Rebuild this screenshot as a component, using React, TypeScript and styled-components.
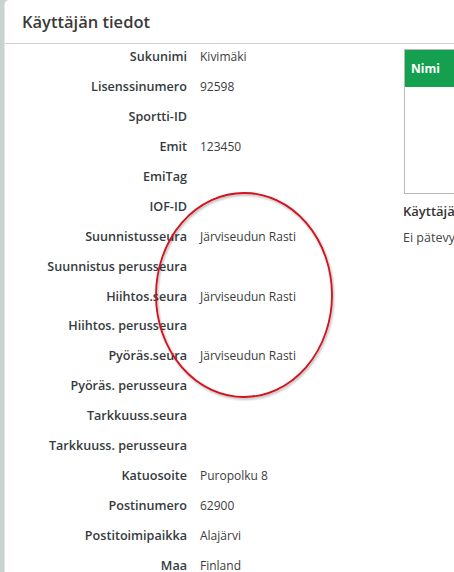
import styled, { createGlobalStyle } from 'styled-components';

const GlobalStyle = createGlobalStyle`
  html, body {
    margin: 0;
    padding: 0;
    overflow: hidden;
    background: #c9d2cf;
  }
  body {
    font-family: "Open Sans", "DejaVu Sans", sans-serif;
    color: #333;
  }
`

type Field = { label: string; value?: string };

const fields: Field[] = [
  { label: 'Sukunimi', value: 'Kivimäki' },
  { label: 'Lisenssinumero', value: '92598' },
  { label: 'Sportti-ID' },
  { label: 'Emit', value: '123450' },
  { label: 'EmiTag' },
  { label: 'IOF-ID' },
  { label: 'Suunnistusseura', value: 'Järviseudun Rasti' },
  { label: 'Suunnistus perusseura' },
  { label: 'Hiihtos.seura', value: 'Järviseudun Rasti' },
  { label: 'Hiihtos. perusseura' },
  { label: 'Pyöräs.seura', value: 'Järviseudun Rasti' },
  { label: 'Pyöräs. perusseura' },
  { label: 'Tarkkuuss.seura' },
  { label: 'Tarkkuuss. perusseura' },
  { label: 'Katuosoite', value: 'Puropolku 8' },
  { label: 'Postinumero', value: '62900' },
  { label: 'Postitoimipaikka', value: 'Alajärvi' },
  { label: 'Maa', value: 'Finland' },
];

export default function App() {
  return (
    <>
      <GlobalStyle />
      <Page>
        <Panel>
          <Header>
            <Title>Käyttäjän tiedot</Title>
          </Header>
          <Body>
            <Form>
              {fields.map((f) => (
                <Row key={f.label}>
                  <Label>{f.label}</Label>
                  <Value>{f.value ?? ''}</Value>
                </Row>
              ))}
            </Form>
            <Side>
              <Table>
                <thead>
                  <tr>
                    <Th>Nimi</Th>
                  </tr>
                </thead>
                <tbody>
                  <tr>
                    <Td></Td>
                  </tr>
                </tbody>
              </Table>
              <SideTitle>Käyttäjän pätevyydet</SideTitle>
              <SideText>Ei pätevyyksiä</SideText>
            </Side>
          </Body>
        </Panel>
        <Annotation width="200" height="230" viewBox="0 0 200 230">
          <defs>
            <filter id="shade" x="-10%" y="-10%" width="120%" height="120%">
              <feDropShadow dx="1" dy="1.5" stdDeviation="1" floodColor="#000" floodOpacity="0.35" />
            </filter>
          </defs>
          <ellipse cx="94" cy="109" rx="88" ry="102" fill="none" stroke="#d0121c" strokeWidth="1.8" filter="url(#shade)" />
        </Annotation>
      </Page>
    </>
  )
}

const Page = styled.div`
  position: relative;
  padding-left: 4px;
  width: 700px;
  height: 572px;
`

const Panel = styled.div`
  background: #fff;
  height: 100%;
  border-top-left-radius: 5px;
  border-left: 1px solid #e3e8e6;
  box-sizing: border-box;
`

const Header = styled.div`
  height: 44px;
  display: flex;
  align-items: center;
  padding-left: 17px;
  border-bottom: 1px solid #cfcfcf;
  box-sizing: border-box;
`

const Title = styled.h1`
  margin: 0;
  font-size: 16.5px;
  font-weight: 600;
  color: #3a3a3a;
`

const Body = styled.div`
  display: flex;
`

const Form = styled.div`
  width: 399px;
  margin-top: -2px;
  display: flex;
  flex-direction: column;
`

const Row = styled.div`
  display: grid;
  grid-template-columns: 182px 1fr;
  column-gap: 13px;
  height: 29.9px;
  align-items: center;
`

const Label = styled.span`
  text-align: right;
  font-size: 12.6px;
  font-weight: 600;
  color: #353b40;
  white-space: nowrap;
`

const Value = styled.span`
  font-size: 12px;
  color: #3c3c3c;
  white-space: nowrap;
`

const Side = styled.div`
  padding-top: 5px;
  display: flex;
  flex-direction: column;
`

const Table = styled.table`
  width: 170px;
  border-collapse: collapse;
  border: 1px solid #b8b8b8;
`

const Th = styled.th`
  background: #15a04f;
  color: #fff;
  text-align: left;
  font-size: 12px;
  font-weight: 700;
  height: 37px;
  padding: 0 6px;
`

const Td = styled.td`
  height: 104px;
`

const SideTitle = styled.div`
  margin-top: 8px;
  font-size: 13px;
  font-weight: 600;
  color: #333;
  margin-left: -1px;
`

const SideText = styled.div`
  margin-top: 9px;
  font-size: 12.5px;
  color: #444;
  margin-left: -1px;
`

const Annotation = styled.svg`
  position: absolute;
  left: 150px;
  top: 186px;
  overflow: visible;
  pointer-events: none;
`
